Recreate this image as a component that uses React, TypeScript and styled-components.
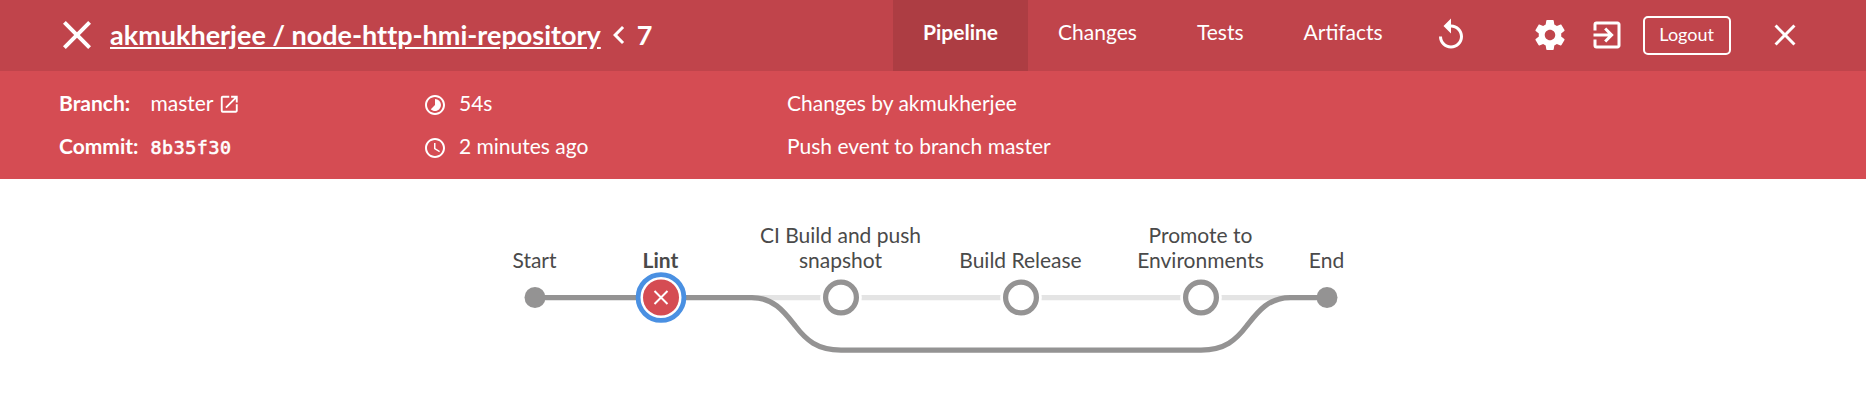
import React from 'react';
import styled, { createGlobalStyle } from 'styled-components';
import {
  MdAccessTime,
  MdChevronLeft,
  MdClose,
  MdExitToApp,
  MdOpenInNew,
  MdReplay,
  MdTimelapse,
} from 'react-icons/md';

const GlobalStyle = createGlobalStyle`
  * { box-sizing: border-box; }
  body {
    margin: 0;
    background: #fff;
    font-family: Lato, sans-serif;
    font-size: 21px;
    line-height: 25px;
  }
  svg { display: block; flex: none; }
`;

const Page = styled.div`
  display: flex;
  flex-direction: column;
  height: 401px;
  overflow: hidden;
`;

const TopBar = styled.header`
  display: flex;
  height: 71px;
  background: #c0444b;
  color: #fff;
`;

const TitleArea = styled.div`
  display: flex;
  align-items: center;
  width: 893px;
  padding: 0 0 1px 53px;
`;

const StatusIcon = styled(MdClose)`
  margin-right: 9px;
`;

const Title = styled.h1`
  display: flex;
  align-items: center;
  margin: 0;
  font-size: 27px;
  font-weight: 700;
  font-variant-ligatures: none;
  white-space: nowrap;
`;

const TitleText = styled.span`
  padding-bottom: 1px;
  line-height: 69px;
`;

const PipelineLink = styled.a`
  color: inherit;
  text-decoration: underline;
`;

const Tabs = styled.nav`
  display: flex;
`;

const Tab = styled.a<{ $active?: boolean }>`
  padding: 0 30px;
  line-height: 64px;
  color: #fff;
  background: ${(p) => (p.$active ? '#ad3d43' : 'transparent')};
  font-weight: ${(p) => (p.$active ? 700 : 400)};
`;

const Actions = styled.div`
  display: flex;
  align-items: center;
  padding: 0 0 1px 20px;
`;

const IconButton = styled.button<{ $gap: number }>`
  margin: 0 ${(p) => p.$gap}px 0 0;
  padding: 0;
  border: 0;
  background: none;
  color: inherit;
`;

const LogoutButton = styled.button`
  width: 88px;
  height: 39px;
  margin: 1px 36px 0 0;
  padding: 0 0 3px;
  border: 2px solid #fff;
  border-radius: 5px;
  background: none;
  color: inherit;
  font: 400 18px/31px Lato, sans-serif;
`;

const Details = styled.section`
  display: grid;
  grid-template-columns: 364px 364px 1fr;
  grid-template-rows: 43px 43px;
  align-items: center;
  height: 108px;
  padding: 10px 0 0 59px;
  background: #d54c53;
  color: #fff;
`;

const Cell = styled.div<{ $align?: string }>`
  display: flex;
  align-items: ${(p) => p.$align ?? 'center'};
  height: 25px;
  white-space: nowrap;
`;

const Label = styled.strong`
  width: 91.5px;
`;

const ExternalIcon = styled(MdOpenInNew)`
  margin: 4px 0 0 4px;
`;

const TimeIcon = styled.span`
  margin: 4px 12px 0 0;
`;

const Hash = styled.code`
  font: 400 18.3px/25px 'DejaVu Sans Mono', monospace;
  letter-spacing: 0.58px;
  -webkit-text-stroke: 0.6px #fff;
`;

const Graph = styled.svg`
  width: 1866px;
  height: 222px;
`;

const StageLabel = styled.text<{ $bold?: boolean }>`
  fill: #4a4a4a;
  font-size: 21px;
  font-weight: ${(p) => (p.$bold ? 700 : 400)};
  text-anchor: middle;
`;

const Connection = styled.path<{ $skipped?: boolean }>`
  fill: none;
  stroke: ${(p) => (p.$skipped ? '#e4e4e4' : '#949393')};
  stroke-width: 5.25px;
`;

const Terminal = styled.circle`
  fill: #949393;
`;

const Halo = styled.circle`
  fill: #fff;
`;

const StageRing = styled.circle`
  fill: #fff;
  stroke: #949393;
  stroke-width: 5.25px;
`;

const SelectionRing = styled.circle`
  fill: #fff;
  stroke: #4a90e2;
  stroke-width: 4.8px;
`;

const FailedDot = styled.circle`
  fill: #d54c53;
`;

const SettingsIcon = () => (
  <svg width="36" height="36" viewBox="0 0 24 24" fill="currentColor">
    <path d="M19.43 12.98c.04-.32.07-.64.07-.98s-.03-.66-.07-.98l2.11-1.65c.19-.15.24-.42.12-.64l-2-3.46c-.12-.22-.39-.3-.61-.22l-2.49 1c-.52-.4-1.08-.73-1.69-.98l-.38-2.65C14.46 2.18 14.25 2 14 2h-4c-.25 0-.46.18-.49.42l-.38 2.65c-.61.25-1.17.59-1.69.98l-2.49-1c-.23-.09-.49 0-.61.22l-2 3.46c-.13.22-.07.49.12.64l2.11 1.65c-.04.32-.07.65-.07.98s.03.66.07.98l-2.11 1.65c-.19.15-.24.42-.12.64l2 3.46c.12.22.39.3.61.22l2.49-1c.52.4 1.08.73 1.69.98l.38 2.65c.03.24.24.42.49.42h4c.25 0 .46-.18.49-.42l.38-2.65c.61-.25 1.17-.59 1.69-.98l2.49 1c.23.09.49 0 .61-.22l2-3.46c.12-.22.07-.49-.12-.64l-2.11-1.65zM12 15.5c-1.93 0-3.5-1.57-3.5-3.5s1.57-3.5 3.5-3.5 3.5 1.57 3.5 3.5-1.57 3.5-3.5 3.5z" />
  </svg>
);

const STAGES = [
  { x: 841, lines: ['CI Build and push', 'snapshot'] },
  { x: 1021, lines: ['Build Release'] },
  { x: 1201, lines: ['Promote to', 'Environments'] },
];
const AXIS = 118.5;
const LABEL_BASE = 89;

const PipelineGraph = () => (
  <Graph viewBox="0 0 1866 222">
    <Connection $skipped d={`M752 ${AXIS}H1290`} />
    <Connection d={`M535 ${AXIS}H752C774 118.5 785 134 795 146.5C806 161 817 171 841 171H1201C1225 171 1236 161 1247 146.5C1257 134 1268 118.5 1290 118.5H1327`} />
    <Terminal cx={535} cy={AXIS} r={10.5} />
    <Terminal cx={1327} cy={AXIS} r={10.5} />
    <StageLabel x={534.5} y={LABEL_BASE}>Start</StageLabel>
    <StageLabel x={1326.5} y={LABEL_BASE}>End</StageLabel>
    <StageLabel $bold x={660.5} y={LABEL_BASE}>Lint</StageLabel>
    <SelectionRing cx={661} cy={AXIS} r={22.9} />
    <FailedDot cx={661} cy={AXIS} r={18} />
    <path d="M654.5 112l13 13M667.5 112l-13 13" stroke="#fff" strokeWidth="2" />
    {STAGES.map(({ x, lines }) => (
      <g key={x}>
        <Halo cx={x} cy={AXIS} r={20.8} />
        <StageRing cx={x} cy={AXIS} r={15.4} />
        {lines.map((line, i) => (
          <StageLabel key={line} x={x - 0.5} y={LABEL_BASE - (lines.length - 1 - i) * 25}>
            {line}
          </StageLabel>
        ))}
      </g>
    ))}
  </Graph>
);

export default function App() {
  return (
    <Page>
      <GlobalStyle />
      <TopBar>
        <TitleArea>
          <StatusIcon size={48} />
          <Title>
            <TitleText><PipelineLink>akmukherjee / node-http-hmi-repository</PipelineLink></TitleText>
            <MdChevronLeft size={36} />
            <TitleText>7</TitleText>
          </Title>
        </TitleArea>
        <Tabs>
          <Tab $active>Pipeline</Tab>
          <Tab>Changes</Tab>
          <Tab>Tests</Tab>
          <Tab>Artifacts</Tab>
        </Tabs>
        <Actions>
          <IconButton $gap={63}><MdReplay size={36} /></IconButton>
          <IconButton $gap={21}><SettingsIcon /></IconButton>
          <IconButton $gap={18}><MdExitToApp size={36} /></IconButton>
          <LogoutButton>Logout</LogoutButton>
          <IconButton $gap={0}><MdClose size={36} /></IconButton>
        </Actions>
      </TopBar>
      <Details>
        <Cell><Label>Branch:</Label>master<ExternalIcon size={22.5} /></Cell>
        <Cell><TimeIcon><MdTimelapse size={24} /></TimeIcon>54s</Cell>
        <Cell>Changes by akmukherjee</Cell>
        <Cell $align="baseline"><Label>Commit:</Label><Hash>8b35f30</Hash></Cell>
        <Cell><TimeIcon><MdAccessTime size={24} /></TimeIcon>2 minutes ago</Cell>
        <Cell>Push event to branch master</Cell>
      </Details>
      <PipelineGraph />
    </Page>
  );
}
